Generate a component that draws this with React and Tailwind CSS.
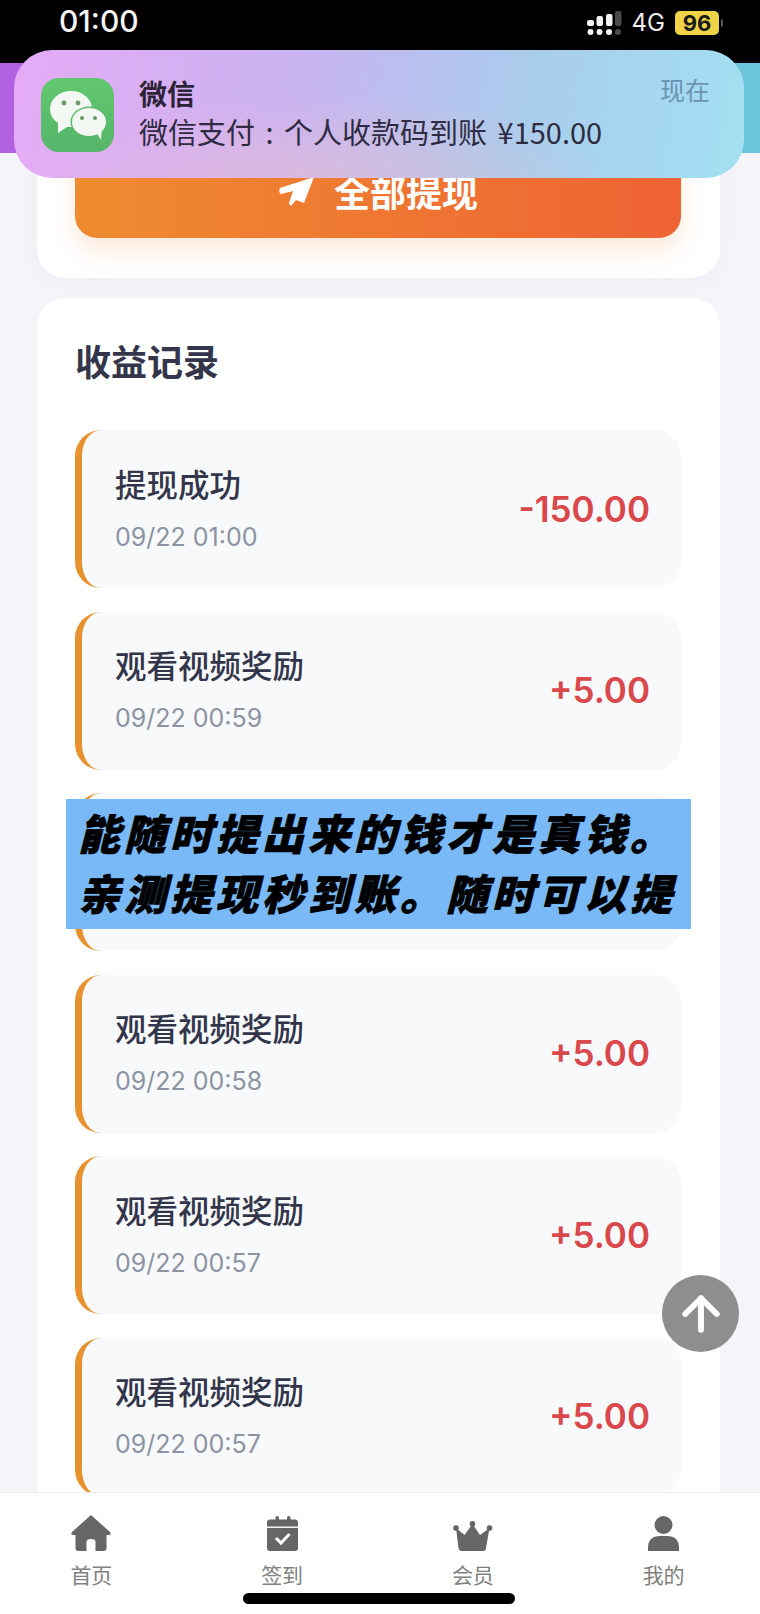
import { ArrowUp } from 'lucide-react';

// row 3 sits fully under the subtitle strip, so it has no visible text
const records = [
  { title: '提现成功', time: '09/22 01:00', amount: '-150.00' },
  { title: '观看视频奖励', time: '09/22 00:59', amount: '+5.00' },
  { title: '', time: '', amount: '' },
  { title: '观看视频奖励', time: '09/22 00:58', amount: '+5.00' },
  { title: '观看视频奖励', time: '09/22 00:57', amount: '+5.00' },
  { title: '观看视频奖励', time: '09/22 00:57', amount: '+5.00' },
];

function SignalDots() {
  return (
    <svg width="36" height="24" viewBox="0 0 36 24">
      <rect x="1" y="9" width="7" height="6" rx="2" fill="#f2f2f2" />
      <rect x="10.5" y="5" width="6.5" height="10" rx="2" fill="#f2f2f2" />
      <rect x="20" y="3" width="6.5" height="12" rx="2" fill="#f2f2f2" />
      <rect x="29" y="0" width="6.5" height="15" rx="2" fill="#4a4a4a" />
      <circle cx="4.5" cy="21" r="3" fill="#f2f2f2" />
      <circle cx="13.5" cy="21" r="3" fill="#f2f2f2" />
      <circle cx="23" cy="21" r="3" fill="#f2f2f2" />
      <circle cx="32" cy="21" r="3" fill="#4a4a4a" />
    </svg>
  );
}

function WechatIcon() {
  return (
    <svg width="58" height="50" viewBox="0 0 58 50">
      <ellipse cx="22" cy="19" rx="21" ry="18" fill="#f4f8f2" />
      <path d="M9 31 L9 43 L21 35 Z" fill="#f4f8f2" />
      <circle cx="15" cy="13" r="2.4" fill="#6a9a70" />
      <circle cx="29" cy="13" r="2.4" fill="#6a9a70" />
      <ellipse cx="40" cy="32" rx="18.5" ry="15.5" fill="#5cb86c" />
      <ellipse cx="40" cy="32" rx="17" ry="14" fill="#f4f8f2" />
      <path d="M47 42 L52 50 L53 38 Z" fill="#f4f8f2" />
      <circle cx="33" cy="28" r="2.1" fill="#6a9a70" />
      <circle cx="46" cy="28" r="2.1" fill="#6a9a70" />
    </svg>
  );
}

function PlaneIcon() {
  return (
    <svg width="36" height="31" viewBox="0 0 36 31">
      <path d="M36 1 L2 12 Q0 16 3 18 L15 15 L11 27 Q12 31 14 29 L18 24 L26 27 Z" fill="#fff" />
    </svg>
  );
}

function HomeIcon() {
  return (
    <svg width="40" height="36" viewBox="0 0 40 36" fill="#666">
      <path d="M20 0 L39 17 Q41 20 37.5 20 L35.5 20 L35.5 33 Q35.5 36 32.5 36 L24.5 36 L24.5 27 Q24.5 24 20 24 Q15.5 24 15.5 27 L15.5 36 L7.5 36 Q4.5 36 4.5 33 L4.5 20 L2.5 20 Q-1 20 1 17 Z" />
    </svg>
  );
}

function CalendarIcon() {
  return (
    <svg width="31" height="35" viewBox="0 0 31 35">
      <rect x="0" y="3.5" width="31" height="31.5" rx="3" fill="#666" />
      <rect x="8.5" y="0" width="3.5" height="7" rx="1.7" fill="#666" />
      <rect x="20" y="0" width="3.5" height="7" rx="1.7" fill="#666" />
      <rect x="0" y="10.5" width="31" height="1.4" fill="#fff" />
      <path d="M9 22 L14 27 L22.5 18" fill="none" stroke="#fff" strokeWidth="3" />
    </svg>
  );
}

function CrownIcon() {
  return (
    <svg width="40" height="30" viewBox="0 0 40 30" fill="#666">
      <circle cx="3" cy="7" r="2.8" />
      <circle cx="19.5" cy="2.8" r="2.8" />
      <circle cx="36.5" cy="7" r="2.8" />
      <path d="M3 7 L11.5 14 L19.5 3 L27 14 L36.5 7 L33 27 Q33 30 30 30 L9 30 Q6 30 5.5 27 Z" />
    </svg>
  );
}

function UserIcon() {
  return (
    <svg width="31" height="35" viewBox="0 0 31 35" fill="#666">
      <circle cx="15.5" cy="9" r="9" />
      <path d="M0 35 L0 32 Q0 20 12 20 L19 20 Q31 20 31 32 L31 35 Z" />
    </svg>
  );
}

const tabs = [
  { label: '首页', icon: <HomeIcon /> },
  { label: '签到', icon: <CalendarIcon /> },
  { label: '会员', icon: <CrownIcon /> },
  { label: '我的', icon: <UserIcon /> },
];

function RecordRow({ title, time, amount }) {
  return (
    <div className="h-[158px] shrink-0 flex items-center justify-between bg-[#f8f9fb] rounded-[26px] border-l-[7px] border-[#e8912f] pl-[33px] pr-[31px]">
      <div className="pb-[4px]">
        <div className="text-[31.5px] leading-[40px] font-medium text-[#33364a]">{title}</div>
        <div className="mt-[19px] text-[25px] leading-[30px] text-[#8d93a3] font-['Inter','Noto_Sans_CJK_SC',sans-serif]">{time}</div>
      </div>
      <div className="text-[35px] font-semibold text-[#d9484b] font-['Inter','Liberation_Sans',sans-serif]">{amount}</div>
    </div>
  );
}

export default function App() {
  return (
    <div className="relative w-[760px] h-[1614px] overflow-hidden flex flex-col bg-[#f4f4f9] font-['Noto_Sans_CJK_SC','Noto_Sans',sans-serif]">
      <div className="h-[63px] shrink-0 bg-black flex items-start justify-between pl-[59px] pr-[37px] pt-[4px] font-['Inter','Liberation_Sans',sans-serif]">
        <span className="text-[30px] leading-[34px] font-medium text-[#f5f5f5]">01:00</span>
        <div className="flex items-center h-[33px] pt-[5px]">
          <SignalDots />
          <span className="ml-[10px] text-[24px] leading-[30px] text-[#eeeeee]">4G</span>
          <span className="ml-[10px] w-[44px] h-[24px] rounded-[5px] bg-[#f1d348] flex items-center justify-center text-[22px] leading-none font-bold text-[#1a1a1a]">96</span>
          <span className="ml-[2px] w-[2px] h-[8px] rounded-r-full bg-[#555555]"></span>
        </div>
      </div>
      <div className="h-[90px] shrink-0 bg-gradient-to-r from-[#b25fe2] to-[#69c6dc]"></div>

      <div className="flex-1 min-h-0 overflow-hidden pl-[37px] pr-[40px] flex flex-col gap-[20px]">
        <div className="h-[125px] shrink-0 bg-white rounded-b-[28px] pl-[38px] pr-[39px] shadow-[0_4px_20px_rgba(120,120,160,0.06)]">
          <div className="h-[85px] rounded-b-[22px] bg-gradient-to-r from-[#ef8b2f] to-[#ee6234] flex items-center justify-center gap-[20px] pb-[9px] shadow-[0_12px_24px_rgba(240,130,50,0.18)]">
            <PlaneIcon />
            <span className="text-[36px] leading-[48px] font-semibold text-white">全部提现</span>
          </div>
        </div>

        <div className="flex-1 min-h-0 overflow-hidden bg-white rounded-t-[28px] pl-[38px] pr-[39px] pt-[40px]">
          <h2 className="text-[36px] leading-[44px] font-semibold text-[#33364a] mb-[48px]">收益记录</h2>
          <div className="flex flex-col gap-[23.5px]">
            {records.map((r, i) => (
              <RecordRow key={i} {...r} />
            ))}
          </div>
        </div>
      </div>

      <div className="relative h-[122px] shrink-0 bg-white border-t border-[#ececec]">
        <div className="-ml-[4px] w-[763px] grid grid-cols-4">
          {tabs.map((t) => (
            <div key={t.label} className="flex flex-col items-center pt-[20px]">
              <div className="h-[38px] flex items-end">{t.icon}</div>
              <span className="mt-[9px] text-[21px] leading-[28px] text-[#808080]">{t.label}</span>
            </div>
          ))}
        </div>
        <div className="absolute left-[243px] top-[100px] w-[272px] h-[11px] rounded-full bg-black"></div>
      </div>

      {/* notification banner over the page */}
      <div className="absolute left-[14px] top-[50px] w-[730px] h-[128px] rounded-[38px] bg-[radial-gradient(ellipse_at_40%_110%,rgba(240,190,205,0.55),rgba(240,190,205,0)_50%),linear-gradient(100deg,#e6abf6_0%,#c9b3f1_38%,#a9cdec_70%,#a2e0f1_100%)] flex">
        <div className="ml-[27px] mt-[28px] w-[73px] h-[74px] rounded-[18px] bg-gradient-to-b from-[#62c86f] to-[#55b56a] flex items-center justify-center">
          <WechatIcon />
        </div>
        <div className="ml-[25px] mt-[24px] flex-1">
          <div className="text-[28px] leading-[38px] font-bold text-[#2c2436]">微信</div>
          <div className="text-[29px] leading-[38px] text-[#2f2b42] whitespace-nowrap [word-spacing:4px]">微信支付 : 个人收款码到账 ¥150.00</div>
        </div>
        <span className="mr-[34px] mt-[21px] text-[25px] leading-[36px] text-[#6c92b5]">现在</span>
      </div>

      {/* subtitle strip burned over the video */}
      <div className="absolute left-[66px] top-[799px] w-[625px] h-[130px] bg-[#79b9f8] pl-[12px] pb-[4px] flex flex-col justify-center">
        <div className="text-[42px] leading-[60px] font-black italic tracking-[4px] text-black whitespace-nowrap [-webkit-text-stroke:0.8px_black]">能随时提出来的钱才是真钱。</div>
        <div className="text-[42px] leading-[60px] font-black italic tracking-[4px] text-black whitespace-nowrap [-webkit-text-stroke:0.8px_black]">亲测提现秒到账。随时可以提</div>
      </div>

      <div className="absolute left-[662px] top-[1275px] w-[77px] h-[77px] rounded-full bg-[#8e8e8e] flex items-center justify-center">
        <ArrowUp size={54} color="#ffffff" strokeWidth={2.6} />
      </div>
    </div>
  );
}
